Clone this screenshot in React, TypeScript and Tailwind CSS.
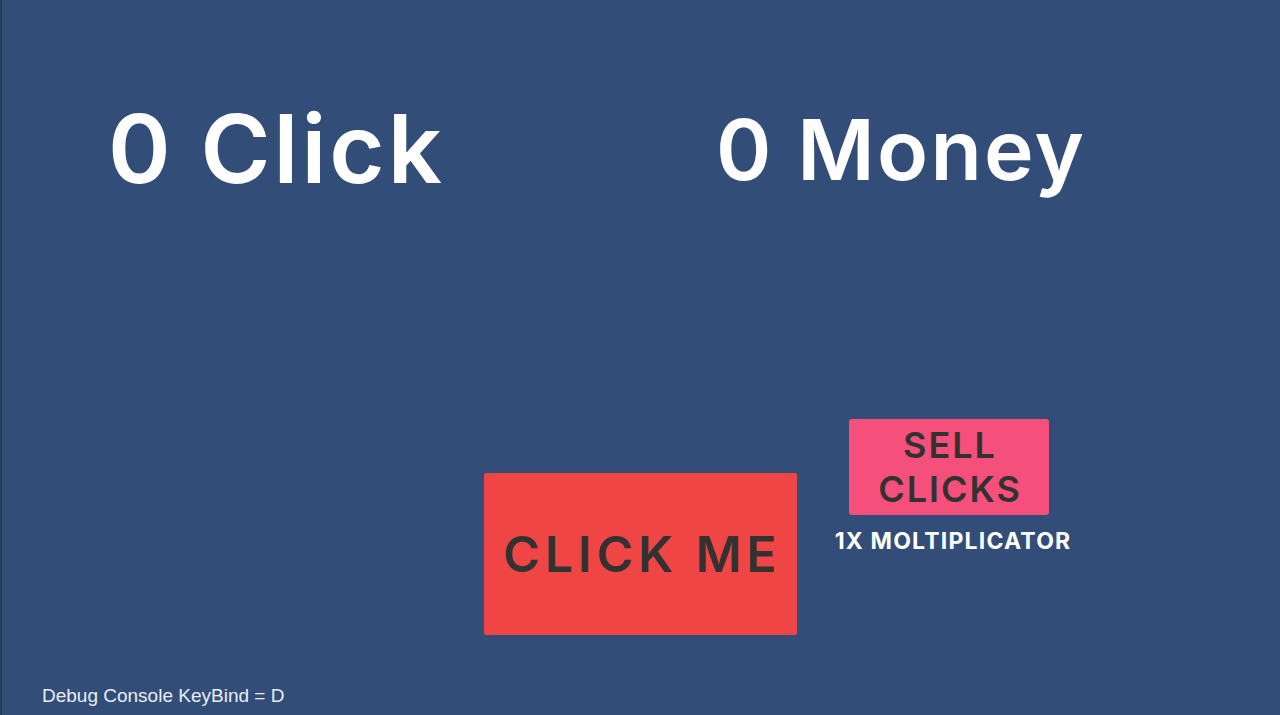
export default function App() {
    return (
        <div className="flex h-[715px] w-full flex-col overflow-hidden border-l-2 border-[#24395a] bg-[#324d78] font-['Inter','Liberation_Sans',sans-serif]">
            <div className="flex items-start">
                <h1 className="ml-[106px] mt-[101px] w-[608px] text-[95px] font-semibold leading-none tracking-[3px] text-white">
                    0 Click
                </h1>
                <h1 className="mt-[108px] text-[84px] font-semibold leading-none tracking-[2.3px] text-white">
                    0 Money
                </h1>
            </div>

            <div className="mt-[223px] flex items-start pl-[482px]">
                <button className="mt-[54px] flex h-[162px] w-[313px] items-center justify-center rounded-[2px] bg-[#ef4545] pl-[4px] text-[50px] font-semibold leading-none tracking-[4.8px] text-[#323232]">
                    CLICK ME
                </button>
                <div className="ml-[52px] flex w-[200px] flex-col items-center">
                    <button className="flex h-[96px] w-[200px] flex-col items-center justify-center rounded-[3px] bg-[#f4507b] pl-[2px] text-[36px] font-semibold leading-[44px] tracking-[2px] text-[#323232]">
                        <span>SELL</span>
                        <span>CLICKS</span>
                    </button>
                    <p className="ml-[8px] mt-[15px] whitespace-nowrap text-[23px] font-bold leading-none tracking-[1.2px] text-white">
                        1X MOLTIPLICATOR
                    </p>
                </div>
            </div>

            <p className="mt-auto pb-[10px] pl-[40px] font-['Liberation_Sans',sans-serif] text-[19px] leading-none text-[#e8eef6]">
                Debug Console KeyBind = D
            </p>
        </div>
    );
}
